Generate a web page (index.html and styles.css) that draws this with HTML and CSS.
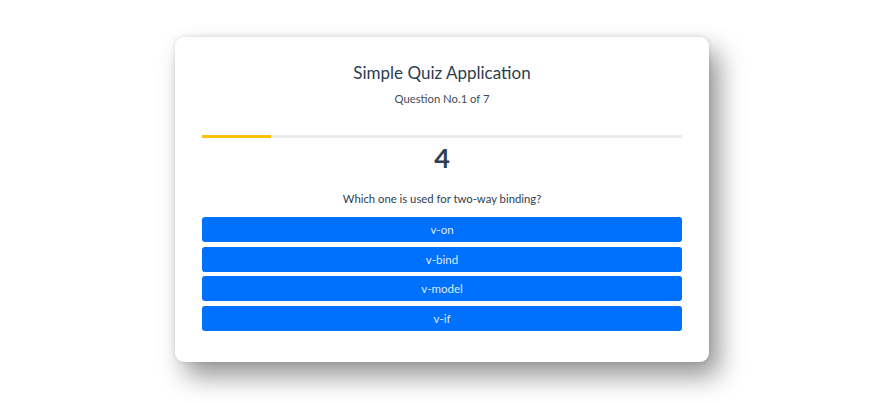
FILE: index.html
```html
<!DOCTYPE html>
<html>
<head>
<meta charset="utf-8">
<link rel="stylesheet" href="styles.css">
</head>
<body>
<div class="page">
  <div class="card">
    <h1 class="title">Simple Quiz Application</h1>
    <p class="subtitle">Question No.1 of 7</p>
    <div class="progress"><div class="progress-fill" style="width:14.3%"></div></div>
    <div class="score">4</div>
    <p class="question">Which one is used for two-way binding?</p>
    <div class="options">
      <button class="option">v-on</button>
      <button class="option">v-bind</button>
      <button class="option">v-model</button>
      <button class="option">v-if</button>
    </div>
  </div>
</div>
</body>
</html>
```
FILE: styles.css
```css
html, body {
  margin: 0;
  padding: 0;
  background: #ffffff;
}
body {
  font-family: Lato, "Open Sans", sans-serif;
  color: #2c3e50;
}
.page {
  box-sizing: border-box;
  min-height: 403px;
  display: flex;
  justify-content: center;
  align-items: flex-start;
  padding-top: 37px;
  padding-bottom: 42px;
  padding-left: 4px;
}
.card {
  width: 480px;
  background: #fff;
  border-radius: 9px;
  padding: 25px 27px 31px;
  box-shadow: 10px 14px 26px rgba(0, 0, 0, 0.42), 0 0 5px rgba(0, 0, 0, 0.12);
}
.title {
  margin: 0;
  font-size: 17px;
  font-weight: 400;
  line-height: 22px;
  text-align: center;
  color: #2c3e50;
}
.subtitle {
  margin: 7px 0 0;
  font-size: 11.3px;
  line-height: 16px;
  text-align: center;
  color: #3f4e5d;
}
.progress {
  margin-top: 28px;
  height: 3px;
  background: #ececec;
}
.progress-fill {
  height: 100%;
  background: #ffc107;
}
.score {
  margin-top: 4px;
  font-size: 27px;
  font-weight: 700;
  line-height: 32px;
  text-align: center;
  color: #2c3e50;
}
.question {
  margin: 17px 0 0;
  font-size: 11.3px;
  line-height: 16px;
  text-align: center;
  color: #2c3e50;
}
.options {
  margin-top: 10px;
  display: flex;
  flex-direction: column;
  gap: 4.5px;
}
.option {
  display: block;
  width: 100%;
  height: 25px;
  border: none;
  border-radius: 3px;
  background: #0070ff;
  color: #dfeaff;
  font-family: Lato, "Open Sans", sans-serif;
  font-size: 11.5px;
  font-weight: 400;
  padding: 0;
}
```
